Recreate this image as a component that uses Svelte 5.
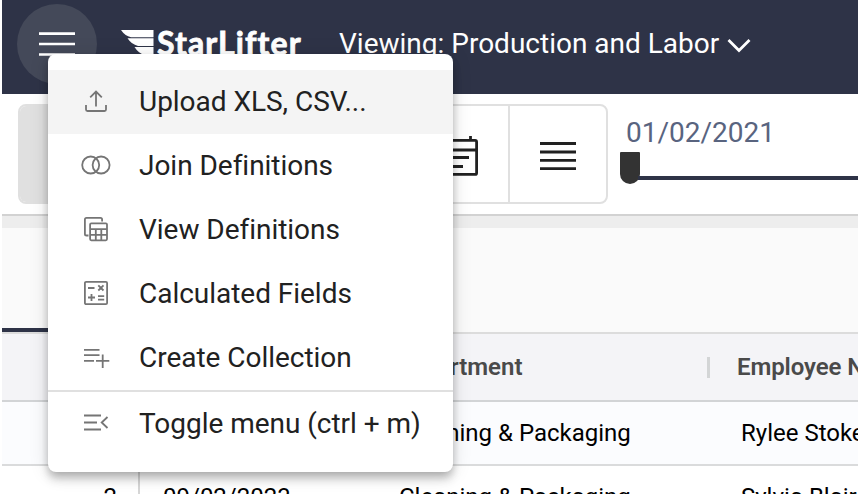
<script>
  const items = [
    { icon: 'upload', label: 'Upload XLS, CSV...' },
    { icon: 'join', label: 'Join Definitions' },
    { icon: 'view', label: 'View Definitions' },
    { icon: 'calc', label: 'Calculated Fields' },
    { icon: 'create', label: 'Create Collection' },
    { icon: 'toggle', label: 'Toggle menu (ctrl + m)' }
  ];
  const rows = [
    { n: 1, date: '09/02/2023', dept: 'Cleaning & Packaging', name: 'Rylee Stokes' },
    { n: 2, date: '09/02/2023', dept: 'Cleaning & Packaging', name: 'Sylvia Blair' }
  ];
</script>

<div class="app">
  <header>
    <button class="burger" aria-label="Menu">
      <svg width="36" height="26" viewBox="0 0 36 26"><path d="M0 1.600h36M0 12h36M0 22.500h36" stroke="#fff" stroke-width="2.600" /></svg>
    </button>
    <div class="logo">
      <svg width="34" height="36" viewBox="0 0 34 36" fill="#fff">
        <path d="M0 0H32.500V7.300H10Q4 6 0 0Z" />
        <path d="M6.500 8.300H32.500V15.900H17Q10.500 14.500 6.500 8.300Z" />
        <path d="M13.500 16.900H32.500V25H24Q17.500 23.500 13.500 16.900Z" />
      </svg>
      <span>StarLifter</span>
    </div>
    <div class="viewing">
      <span>Viewing: Production and Labor</span>
      <svg width="24" height="16" viewBox="0 0 24 16"><path d="M1.500 2 12 12.500 22.500 2" fill="none" stroke="#fff" stroke-width="2.800" /></svg>
    </div>
  </header>

  <div class="toolbar">
    <div class="group">
      <div class="seg on"></div>
      <div class="seg cal">
        <svg width="36" height="44" viewBox="0 0 36 44" fill="none" stroke="#212121" stroke-width="2.800">
          <rect x="1.400" y="5.400" width="33.200" height="34" rx="1.500" />
          <path d="M8 0v5M28.500 1v4M1 15h34M8 22.500h19M8 31.500h13" />
        </svg>
      </div>
      <div class="seg list">
        <svg width="36" height="30" viewBox="0 0 36 30"><path d="M0 2.500h36M0 11h36M0 19.300h36M0 27.600h36" stroke="#212121" stroke-width="2.800" /></svg>
      </div>
    </div>
    <div class="range">
      <span>01/02/2021</span>
      <div class="slider"><i class="thumb"></i><i class="track"></i></div>
    </div>
  </div>
  <div class="strip"></div>
  <div class="panel"><div class="tab"></div></div>

  <div class="row head">
    <div class="c0"></div><div class="c1"></div>
    <div class="c2">Department<i></i></div><div class="c3">Employee Name</div>
  </div>
  {#each rows as r}
    <div class="row" class:odd={r.n === 1}>
      <div class="c0">{r.n === 1 ? '' : r.n}</div><div class="c1">{r.n === 1 ? '' : r.date}</div>
      <div class="c2">{r.dept}</div><div class="c3">{r.name}</div>
    </div>
  {/each}

  <nav class="menu">
    {#each items as item, i}
      {#if i === 5}<hr />{/if}
      <div class="item" class:active={i === 0}>
        <svg width="32" height="32" viewBox="0 0 32 32" fill="none" stroke="#757575" stroke-width="1.800">
          {#if item.icon === 'upload'}
            <path d="M16 20.500V6M10.200 11.300 16 5.500l5.800 5.800M6 19v4.500q0 1.500 1.500 1.500h17q1.500 0 1.500-1.500V19" />
          {:else if item.icon === 'join'}
            <circle cx="10.700" cy="15" r="8.500" /><circle cx="21.100" cy="15" r="8.500" />
          {:else if item.icon === 'view'}
            <path d="M8.500 21.500H6.500q-1.600 0-1.600-1.600V5.500q0-1.600 1.600-1.600h14q1.600 0 1.600 1.600v2" />
            <rect x="10.100" y="9.300" width="16.900" height="17" rx="1.200" />
            <path d="M10 15.200h17M10 20.800h17M15.800 15v11M21.300 15v11" />
          {:else if item.icon === 'calc'}
            <rect x="4.900" y="3.900" width="22.200" height="22.200" rx="1.200" />
            <path d="M8 10h6.500M18.300 7.300l5.200 5.200M23.500 7.300l-5.200 5.200M8 19.500h7M11.500 16v7M18 18.200h6.200M18 21.600h6.200" />
          {:else if item.icon === 'create'}
            <path d="M4 7.800h15.500M4 13.200h15.500M4 18.800h10M16 18.800h13.300M22.700 12.500V26" />
          {:else}
            <path d="M4 7.500h17M4 14.500h13M4 21.500h17M27.500 9 21.700 14.500l5.800 5.500" />
          {/if}
        </svg>
        <span>{item.label}</span>
      </div>
    {/each}
  </nav>
</div>

<style>
  .app {
    position: relative;
    box-sizing: border-box;
    width: 858px;
    height: 494px;
    padding-left: 2px;
    overflow: hidden;
    background: #fff;
    font-family: Roboto, sans-serif;
    color: #000;
  }
  header {
    display: flex;
    height: 94px;
    background: #2e3347;
    color: #fff;
  }
  .burger {
    display: flex;
    align-items: flex-start;
    flex: none;
    width: 80px;
    height: 80px;
    margin: 4px 0 0 15px;
    padding: 28px 0 0 22px;
    box-sizing: border-box;
    border: 0;
    border-radius: 50%;
    background: #444959;
  }
  svg { display: block; flex: none; }
  .logo {
    display: flex;
    width: 218px;
    margin-left: 24px;
    padding-top: 30px;
    box-sizing: border-box;
  }
  .logo span {
    margin: -6px 0 0 2px;
    font: 700 32px/38px Lato, sans-serif;
    -webkit-text-stroke: 0.8px #fff;
    letter-spacing: 1.1px;
  }
  .viewing {
    display: flex;
    padding-top: 26px;
    font-size: 28px;
    line-height: 36px;
    white-space: nowrap;
  }
  .viewing svg { margin: 12px 0 0 8px; }
  .toolbar {
    display: flex;
    height: 120px;
    border-bottom: 2px solid #d2d2d2;
  }
  .group {
    display: flex;
    box-sizing: border-box;
    width: 590px;
    height: 100px;
    margin: 10px 0 0 16px;
    border: 2px solid #e0e0e0;
    border-radius: 8px;
    overflow: hidden;
  }
  .seg { box-sizing: border-box; }
  .on { width: 390px; background: #e0e0e0; clip-path: inset(0 290px 0 0); }
  .cal { width: 100px; padding: 29px 0 0 32px; border-right: 2px solid #e0e0e0; }
  .list { padding: 35px 0 0 30px; }
  .range { flex: 1; margin-left: 12px; padding-top: 21px; }
  .range span {
    display: block;
    margin-left: 6px;
    font-size: 28px;
    line-height: 36px;
    color: #59647f;
  }
  .slider { display: flex; margin-top: 1px; }
  .thumb { width: 20px; height: 32px; background: #333; border-radius: 1px 1px 10px 10px; }
  .track { flex: 1; height: 4px; margin: 24px 0 0 -2px; background: #2e3347; }
  .strip { height: 12px; background: #ededed; }
  .panel {
    display: flex;
    align-items: flex-end;
    height: 104px;
    background: #fafafa;
    border-bottom: 2px solid #dcdcdc;
  }
  .tab { width: 160px; height: 4px; background: #2e3347; }
  .row {
    display: flex;
    height: 62px;
    border-bottom: 2px solid #dadbdc;
    font-size: 24px;
    line-height: 62px;
    white-space: nowrap;
  }
  .row > div { flex: none; }
  .odd { background: #fbfcfe; }
  .head {
    height: 66px;
    line-height: 66px;
    background: #f4f4f7;
    border-color: #d2d4d6;
    color: #4a4a4a;
    font-weight: 600;
  }
  .c0 { box-sizing: border-box; width: 138px; padding-right: 21px; border-right: 2px solid #d6d6d6; text-align: right; }
  .head .c0 { border-color: transparent; }
  .c1 { width: 236px; padding-left: 23px; box-sizing: border-box; }
  .c2 { display: flex; align-items: center; justify-content: space-between; width: 334px; padding-left: 23px; box-sizing: border-box; }
  .head .c2 { padding-left: 19px; }
  .c2 i { width: 3px; height: 21px; background: #d3d5d6; }
  .c3 { padding-left: 31px; }
  .head .c3 { padding-left: 27px; letter-spacing: -0.1px; }
  .menu {
    position: absolute;
    left: 48px;
    top: 54px;
    width: 405px;
    height: 418px;
    padding: 16px 0;
    box-sizing: border-box;
    background: #fff;
    border-radius: 8px;
    box-shadow: 0 4px 8px -2px rgba(0,0,0,.2), 0 8px 10px rgba(0,0,0,.14), 0 2px 20px rgba(0,0,0,.12);
  }
  .item {
    display: flex;
    align-items: center;
    height: 64px;
    padding-left: 32px;
    font-size: 28px;
    letter-spacing: -0.03px;
    color: #212121;
    white-space: nowrap;
  }
  .item span { margin-left: 27px; line-height: 62px; }
  .active { background: #f4f4f4; }
  hr { height: 2px; margin: 0; border: 0; background: #e0e0e0; }
</style>
